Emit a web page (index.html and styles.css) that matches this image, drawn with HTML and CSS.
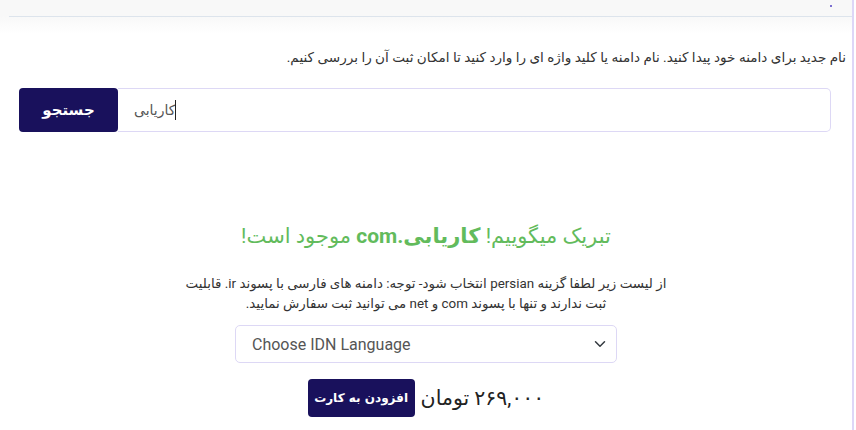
FILE: index.html
```html
<!DOCTYPE html>
<html lang="fa" dir="rtl">
<head>
    <meta charset="UTF-8">
    <meta name="viewport" content="width=device-width, initial-scale=1.0">
    <title>جستجوی دامنه</title>
    <link rel="stylesheet" href="styles.css">
</head>
<body>
    <div class="page">
        <div class="top-bar">
            <span class="dot"></span>
        </div>
        <div class="top-line"></div>

        <p class="intro">نام جدید برای دامنه خود پیدا کنید. نام دامنه یا کلید واژه ای را وارد کنید تا امکان ثبت آن را بررسی کنیم.</p>

        <div class="search">
            <div class="search-input" dir="ltr">
                <span class="search-text">کاریابی</span><span class="caret"></span>
            </div>
            <button class="btn search-btn">جستجو</button>
        </div>

        <div class="result">
            <h2 class="result-title">تبریک میگوییم! <b>کاریابی.com</b> موجود است!</h2>
            <p class="result-note">از لیست زیر لطفا گزینه persian انتخاب شود- توجه: دامنه های فارسی با پسوند ir. قابلیت ثبت ندارند و تنها با پسوند com و net می توانید ثبت سفارش نمایید.</p>

            <div class="idn" dir="ltr">
                <span>Choose IDN Language</span>
                <svg class="chevron" width="12" height="12" viewBox="0 0 16 16">
                    <path d="M2 5l6 6 6-6" fill="none" stroke="#343a40" stroke-width="2" stroke-linecap="round" stroke-linejoin="round"/>
                </svg>
            </div>

            <div class="buy">
                <span class="price">۲۶۹,۰۰۰ تومان</span>
                <button class="btn cart-btn">افزودن به کارت</button>
            </div>
        </div>
    </div>
</body>
</html>
```

FILE: styles.css
```css
html,
body {
    margin: 0;
    padding: 0;
    background: #fff;
    font-family: Roboto, "DejaVu Sans", sans-serif;
    color: #333;
}

.page {
    width: 854px;
    margin-right: auto;
    margin-left: 0;
    min-height: 430px;
    border-right: 2px solid #ddd6f7;
    box-sizing: border-box;
    background: linear-gradient(#f8f8f8 0, #f8f8f8 16px, #fff 34px);
}

.top-bar {
    height: 16px;
    display: flex;
    padding-right: 20px;
}

.dot {
    width: 2px;
    height: 2px;
    margin-top: 5px;
    background: #7b6fd0;
}

.top-line {
    height: 1px;
    background: #dde4ec;
    margin: 0 0 0 9px;
}

.intro {
    margin: 30px 6px 0 0;
    font-size: 13.6px;
    line-height: 20px;
    color: #333;
}

.search {
    display: flex;
    height: 44px;
    margin: 21px 21px 0 19px;
}

.search-input {
    flex: 1;
    display: flex;
    align-items: center;
    padding-left: 16px;
    border: 1px solid #ddd8f5;
    border-left: 0;
    border-radius: 0 5px 5px 0;
    font-size: 14px;
    color: #555;
}

.caret {
    width: 1px;
    height: 20px;
    background: #222;
}

.btn {
    border: 0;
    border-radius: 4px;
    background: #19115c;
    color: #fff;
    font-family: "DejaVu Sans", sans-serif;
    font-weight: bold;
    cursor: pointer;
}

.search-btn {
    width: 99px;
    font-size: 15px;
}

.result {
    text-align: center;
    padding-top: 89px;
}

.result-title {
    margin: 0;
    font-size: 21px;
    font-weight: normal;
    line-height: 30px;
    color: #62bb5c;
}

.result-title b {
    font-weight: bold;
}

.result-note {
    width: 500px;
    margin: 23px auto 0;
    font-size: 13.4px;
    line-height: 20px;
    color: #333;
}

.idn {
    width: 382px;
    height: 38px;
    box-sizing: border-box;
    margin: 11px auto 0;
    padding: 0 10px 0 16px;
    display: flex;
    align-items: center;
    justify-content: space-between;
    border: 1px solid #ddd8f5;
    border-radius: 5px;
    font-size: 16px;
    color: #555;
    text-align: left;
}

.buy {
    display: flex;
    justify-content: center;
    align-items: center;
    gap: 6px;
    margin-top: 16px;
}

.price {
    font-size: 20.5px;
    color: #222;
}

.cart-btn {
    width: 107px;
    height: 38px;
    font-size: 12px;
}
```
